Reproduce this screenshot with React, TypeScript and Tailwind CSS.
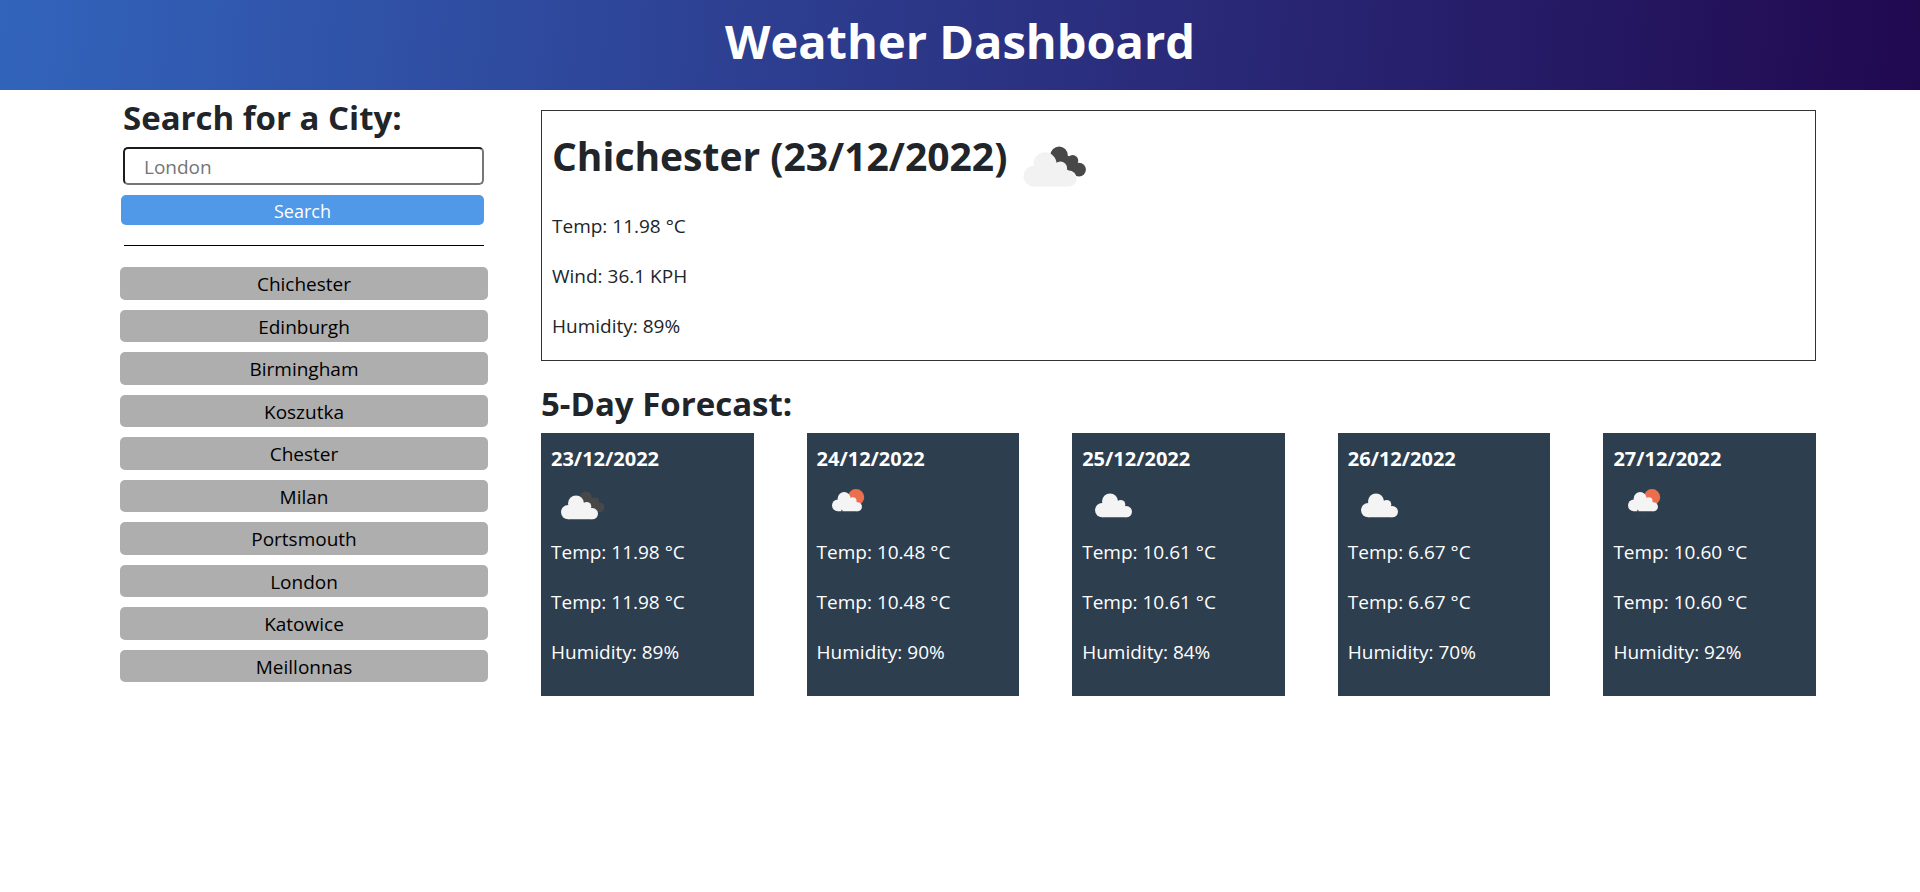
import type { ReactNode } from "react";

type Sky = "broken" | "cloudy" | "rain";

const cities = [
  "Chichester",
  "Edinburgh",
  "Birmingham",
  "Koszutka",
  "Chester",
  "Milan",
  "Portsmouth",
  "London",
  "Katowice",
  "Meillonnas",
];

const forecast: { date: string; sky: Sky; temp: string; humidity: number }[] = [
  { date: "23/12/2022", sky: "broken", temp: "11.98", humidity: 89 },
  { date: "24/12/2022", sky: "rain", temp: "10.48", humidity: 90 },
  { date: "25/12/2022", sky: "cloudy", temp: "10.61", humidity: 84 },
  { date: "26/12/2022", sky: "cloudy", temp: "6.67", humidity: 70 },
  { date: "27/12/2022", sky: "rain", temp: "10.60", humidity: 92 },
];

function Cloud() {
  return (
    <g fill="currentColor">
      <circle cx="7.2" cy="16.6" r="7.2" />
      <circle cx="15" cy="8" r="8" />
      <circle cx="25.7" cy="11" r="4.6" />
      <circle cx="31.4" cy="18.2" r="5.6" />
      <path d="M7.2 10 L15 4 L27 9 L31.4 14 V23.8 H7.2 Z" />
    </g>
  );
}

function SkyIcon({ sky, className }: { sky: Sky; className: string }) {
  const drawings: Record<Sky, ReactNode> = {
    broken: (
      <g transform="translate(10 15.5)">
        <g fill="#484848">
          <circle cx="24.8" cy="2" r="6" />
          <circle cx="34.2" cy="5.8" r="3.9" />
          <circle cx="38.6" cy="12" r="4.8" />
          <path d="M27 1 L35 4 L37 9 L35 15 L24 8 Z" />
        </g>
        <Cloud />
      </g>
    ),
    cloudy: (
      <g transform="translate(13 13.5)">
        <Cloud />
      </g>
    ),
    rain: (
      <>
        <circle cx="39" cy="17.2" r="8.2" fill="#ec6e4c" />
        <g transform="translate(15 12) scale(0.81)">
          <Cloud />
        </g>
        <g stroke="#48484a" strokeWidth="1.2" strokeLinecap="round" opacity="0.5">
          <path d="M24 33.5 L26.5 38" />
          <path d="M28 33.5 L30.5 38" />
          <path d="M32 33.5 L33.5 36" />
        </g>
        <path d="M23.8 31.4 L24.8 29.4 L26 31.4 Z" fill="#2d3e4f" />
      </>
    ),
  };
  return (
    <svg viewBox="0 0 50 50" className={className} aria-hidden="true">
      {drawings[sky]}
    </svg>
  );
}

export default function App() {
  return (
    <div className="min-h-screen bg-white font-['Open_Sans','Noto_Sans',sans-serif] text-[#212529]">
      <header className="bg-[linear-gradient(95deg,#3264bc,#2b3080_55%,#210950)] pt-2.5 pb-[18px] text-center text-white">
        <h1 className="text-[47px] leading-[62px] font-bold">Weather Dashboard</h1>
      </header>

      <div className="flex gap-[53px] pr-[104px] pl-[120px]">
        <aside className="w-[368px] shrink-0">
          <form className="mr-1 ml-px" onSubmit={(e) => e.preventDefault()}>
            <label htmlFor="city" className="ml-0.5 block pt-1.5 pb-2 text-[33px] leading-[43px] font-bold">
              Search for a City:
            </label>
            <div className="ml-0.5">
              <input
                id="city"
                type="text"
                placeholder="London"
                className="h-[38px] w-full rounded-[5px] border-2 border-t-[#1c1c1c] border-r-[#767676] border-b-[#767676] border-l-[#1c1c1c] px-[19px] pt-0.5 text-[19px] outline-none placeholder:text-[#757575]"
              />
            </div>
            <button
              type="submit"
              className="mt-2.5 block h-[30px] w-full rounded-[5px] bg-[#5098e8] text-[18px] leading-8 text-white"
            >
              Search
            </button>
          </form>
          <hr className="mt-5 mr-1 mb-[21px] ml-1 border-black" />
          <ul className="grid h-[415px] auto-rows-fr gap-2.5">
            {cities.map((city) => (
              <li key={city} className="flex">
                <button type="button" className="w-full rounded-[5px] bg-[#aeaeae] pt-px text-[19px] leading-8 text-black">
                  {city}
                </button>
              </li>
            ))}
          </ul>
        </aside>

        <main className="min-w-0 flex-1">
          <section className="mt-5 border border-[#333] px-2.5 pb-[19px]">
            <div className="flex h-[100px] items-center">
              <h2 className="mb-2.5 text-[39px] leading-[60px] font-bold">Chichester (23/12/2022)</h2>
              <SkyIcon sky="broken" className="mt-2.5 ml-0.5 size-[72px] overflow-visible text-[#f2f2f2]" />
            </div>
            <div className="flex flex-col gap-5 text-[19px] leading-[30px]">
              <p>Temp: 11.98 °C</p>
              <p>Wind: 36.1 KPH</p>
              <p>Humidity: 89%</p>
            </div>
          </section>

          <h2 className="pt-[21px] pb-2 text-[33px] leading-[43px] font-bold">5-Day Forecast:</h2>
          <div className="grid grid-cols-5 gap-[53px]">
            {forecast.map((day) => (
              <article key={day.date} className="bg-[#2d3e4f] px-2.5 pt-[11px] pb-[29px] text-[19px] leading-[30px] text-white">
                <h3 className="text-[20px] font-bold">{day.date}</h3>
                <SkyIcon sky={day.sky} className="mt-1.5 mb-[7px] block size-[50px] overflow-visible text-[#f4f4f4]" />
                <div className="flex flex-col gap-5">
                  <p>Temp: {day.temp} °C</p>
                  <p>Temp: {day.temp} °C</p>
                  <p>Humidity: {day.humidity}%</p>
                </div>
              </article>
            ))}
          </div>
        </main>
      </div>
    </div>
  );
}
